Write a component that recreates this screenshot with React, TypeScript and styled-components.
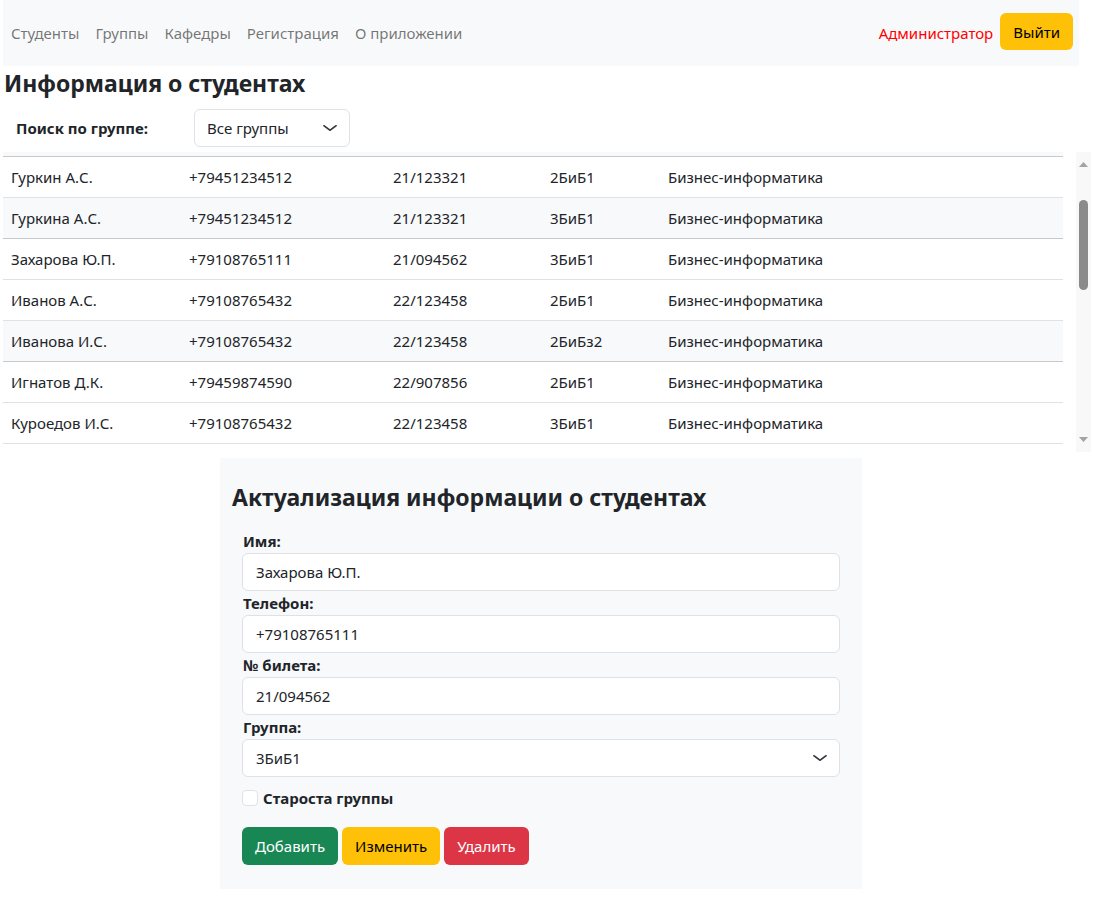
import React, { useEffect, useRef } from "react";
import styled, { createGlobalStyle } from "styled-components";

const Global = createGlobalStyle`
  html, body { margin: 0; padding: 0; background: #fff; }
  body {
    font-family: "Noto Sans", "Open Sans", sans-serif;
    font-size: 15px;
    line-height: 1.5;
    color: #212529;
  }
  * { box-sizing: border-box; }
`;

const Page = styled.div`
  padding: 0 15px 0 3px;
`;

const Navbar = styled.nav`
  height: 66px;
  background: #f8f9fa;
  display: flex;
  align-items: center;
  justify-content: space-between;
  padding: 0 6px 0 0;
`;

const NavLinks = styled.div`
  display: flex;
  align-items: center;
`;

const NavLink = styled.a`
  color: rgba(0, 0, 0, 0.55);
  text-decoration: none;
  padding: 0 8px;
  font-size: 15px;
  line-height: 24px;
`;

const NavRight = styled.div`
  display: flex;
  align-items: center;
  gap: 6px;
`;

const AdminText = styled.span`
  color: #ff0000;
  font-size: 15px;
`;

const Button = styled.button<{ $variant: "warning" | "success" | "danger" }>`
  font-family: inherit;
  font-size: 15px;
  line-height: 24px;
  height: 38px;
  padding: 0 12px;
  border-radius: 6px;
  border: 1px solid transparent;
  cursor: pointer;
  background: ${(p) =>
    p.$variant === "warning" ? "#ffc107" : p.$variant === "success" ? "#198754" : "#dc3545"};
  color: ${(p) => (p.$variant === "warning" ? "#000" : "#fff")};
`;

const LogoutButton = styled(Button)`
  height: 37px;
  margin-top: -3px;
  margin-left: 1px;
`;

const Title = styled.h2`
  font-size: 23px;
  font-weight: 700;
  line-height: 29px;
  margin: 3px 0 0 1px;
`;

const SearchRow = styled.div`
  display: flex;
  align-items: center;
  margin-top: 11px;
  padding-left: 13px;
`;

const SearchLabel = styled.label`
  width: 178px;
  font-weight: 700;
  font-size: 15px;
`;

const SelectWrap = styled.div<{ $width?: string }>`
  position: relative;
  width: ${(p) => p.$width || "100%"};
`;

const Select = styled.select<{ $padLeft?: number }>`
  appearance: none;
  -webkit-appearance: none;
  width: 100%;
  height: 38px;
  font-family: inherit;
  font-size: 15px;
  color: #212529;
  background: #fff;
  border: 1px solid #dee2e6;
  border-radius: 6px;
  padding: 0 36px 0 ${(p) => p.$padLeft ?? 12}px;
  outline: none;
`;

const Chevron = styled.svg`
  position: absolute;
  right: 12px;
  top: 13px;
  width: 16px;
  height: 12px;
  pointer-events: none;
`;

const TableArea = styled.div`
  margin-top: 5px;
  height: 300px;
  width: 1088px;
  display: flex;
  gap: 13px;
`;

const TableViewport = styled.div`
  width: 1060px;
  height: 100%;
  overflow: hidden;
`;

const TableHead = styled.div`
  position: sticky;
  top: 0;
  height: 5px;
  background: #f8f9fa;
  border-bottom: 1px solid #c8c9ca;
`;

const Row = styled.div<{ $shade?: boolean }>`
  display: grid;
  grid-template-columns: 178px 204px 157px 118px 1fr;
  height: 41px;
  align-items: center;
  border-bottom: 1px solid ${(p) => (p.$shade ? "#c8c9ca" : "#dee2e6")};
  background: ${(p) => (p.$shade ? "#f8f9fa" : "#fff")};
`;

const Cell = styled.div`
  padding: 0 8px;
  font-size: 15px;
  white-space: nowrap;
`;

const ScrollTrack = styled.div`
  width: 15px;
  height: 100%;
  background: #f8f8f8;
  display: flex;
  flex-direction: column;
  align-items: center;
`;

const ScrollArrow = styled.svg`
  width: 15px;
  height: 17px;
  flex: none;
`;

const ThumbLane = styled.div`
  flex: 1;
  width: 100%;
  display: flex;
  justify-content: center;
`;

const Thumb = styled.div`
  width: 9px;
  height: 90px;
  border-radius: 5px;
  background: #8a8a8a;
`;

const Card = styled.div`
  width: 642px;
  margin: 6px auto 0;
  background: #f8f9fa;
  padding: 25px 22px 24px;
`;

const CardTitle = styled.h3`
  font-size: 23px;
  font-weight: 700;
  line-height: 29px;
  margin: 0 0 17px -10px;
`;

const FieldLabel = styled.label`
  display: block;
  font-weight: 700;
  font-size: 15px;
  line-height: 24px;
  padding-left: 1px;
`;

const Input = styled.input`
  display: block;
  width: 100%;
  height: 38px;
  font-family: inherit;
  font-size: 15px;
  color: #212529;
  background: #fff;
  border: 1px solid #dee2e6;
  border-radius: 6px;
  padding: 0 13px;
  outline: none;
`;

const CheckRow = styled.div`
  display: flex;
  align-items: center;
  gap: 5px;
  margin-top: 10px;
`;

const Checkbox = styled.input`
  appearance: none;
  -webkit-appearance: none;
  width: 16px;
  height: 16px;
  margin: 0;
  background: #fff;
  border: 1px solid #dee2e6;
  border-radius: 4px;
`;

const CheckLabel = styled.label`
  font-weight: 700;
  font-size: 15px;
`;

const ButtonRow = styled.div`
  display: flex;
  gap: 4px;
  margin-top: 17px;
`;

const ChevronIcon = () => (
  <Chevron viewBox="0 0 16 16" preserveAspectRatio="none">
    <path d="M2 5l6 6 6-6" fill="none" stroke="#343a40" strokeWidth="2" strokeLinecap="round" strokeLinejoin="round" />
  </Chevron>
);

const students: [string, string, string, string, string][] = [
  ["Абрамов К.В.", "+79451112233", "21/100101", "2БиБ1", "Бизнес-информатика"],
  ["Белова Е.А.", "+79108761234", "22/100202", "3БиБ1", "Бизнес-информатика"],
  ["Гуркин А.С.", "+79451234512", "21/123321", "2БиБ1", "Бизнес-информатика"],
  ["Гуркина А.С.", "+79451234512", "21/123321", "3БиБ1", "Бизнес-информатика"],
  ["Захарова Ю.П.", "+79108765111", "21/094562", "3БиБ1", "Бизнес-информатика"],
  ["Иванов А.С.", "+79108765432", "22/123458", "2БиБ1", "Бизнес-информатика"],
  ["Иванова И.С.", "+79108765432", "22/123458", "2БиБз2", "Бизнес-информатика"],
  ["Игнатов Д.К.", "+79459874590", "22/907856", "2БиБ1", "Бизнес-информатика"],
  ["Куроедов И.С.", "+79108765432", "22/123458", "3БиБ1", "Бизнес-информатика"],
  ["Ларионов П.Н.", "+79451230011", "21/104455", "2БиБ1", "Бизнес-информатика"],
  ["Морозова А.А.", "+79108760022", "22/110033", "3БиБ1", "Бизнес-информатика"],
  ["Никитин С.В.", "+79451230033", "21/120044", "2БиБз2", "Бизнес-информатика"],
  ["Орлова М.Д.", "+79108760044", "22/130055", "2БиБ1", "Бизнес-информатика"],
  ["Петров Г.И.", "+79451230055", "21/140066", "3БиБ1", "Бизнес-информатика"],
  ["Романова Т.С.", "+79108760066", "22/150077", "2БиБ1", "Бизнес-информатика"],
  ["Сидоров В.А.", "+79451230077", "21/160088", "3БиБ1", "Бизнес-информатика"],
  ["Тарасова Н.Е.", "+79108760088", "22/170099", "2БиБз2", "Бизнес-информатика"],
  ["Устинов Р.О.", "+79451230099", "21/180011", "2БиБ1", "Бизнес-информатика"],
  ["Фёдорова Л.К.", "+79108760111", "22/190022", "3БиБ1", "Бизнес-информатика"],
  ["Харитонов Е.П.", "+79451230122", "21/200033", "2БиБ1", "Бизнес-информатика"],
  ["Шмелёв А.Р.", "+79108760144", "22/205050", "2БиБ1", "Бизнес-информатика"],
  ["Яковлева О.В.", "+79108760133", "22/210044", "3БиБ1", "Бизнес-информатика"],
];

const shaded = new Set([3, 6]);
const SCROLL_TOP = 82;

export default function App() {
  const viewRef = useRef<HTMLDivElement>(null);
  useEffect(() => {
    if (viewRef.current) viewRef.current.scrollTop = SCROLL_TOP;
  }, []);

  return (
    <>
      <Global />
      <Page>
        <Navbar>
          <NavLinks>
            <NavLink href="#">Студенты</NavLink>
            <NavLink href="#">Группы</NavLink>
            <NavLink href="#">Кафедры</NavLink>
            <NavLink href="#">Регистрация</NavLink>
            <NavLink href="#">О приложении</NavLink>
          </NavLinks>
          <NavRight>
            <AdminText>Администратор</AdminText>
            <LogoutButton $variant="warning">Выйти</LogoutButton>
          </NavRight>
        </Navbar>

        <Title>Информация о студентах</Title>

        <SearchRow>
          <SearchLabel>Поиск по группе:</SearchLabel>
          <SelectWrap $width="156px">
            <Select defaultValue="all">
              <option value="all">Все группы</option>
              <option>2БиБ1</option>
              <option>3БиБ1</option>
              <option>2БиБз2</option>
            </Select>
            <ChevronIcon />
          </SelectWrap>
        </SearchRow>

        <TableArea>
          <TableViewport ref={viewRef}>
            <TableHead />
            {students.map((s, i) => (
              <Row key={i} $shade={shaded.has(i)}>
                {s.map((c, j) => (
                  <Cell key={j}>{c}</Cell>
                ))}
              </Row>
            ))}
          </TableViewport>
          <ScrollTrack>
            <ScrollArrow viewBox="0 0 15 17">
              <path d="M3 15 L7.5 10 L12 15 Z" fill="#a3a3a3" />
            </ScrollArrow>
            <ThumbLane>
              <Thumb style={{ marginTop: 31 }} />
            </ThumbLane>
            <ScrollArrow viewBox="0 0 15 17">
              <path d="M3 2 L12 2 L7.5 7 Z" fill="#a3a3a3" />
            </ScrollArrow>
          </ScrollTrack>
        </TableArea>

        <Card>
          <CardTitle>Актуализация информации о студентах</CardTitle>
          <FieldLabel>Имя:</FieldLabel>
          <Input defaultValue="Захарова Ю.П." />
          <FieldLabel>Телефон:</FieldLabel>
          <Input defaultValue="+79108765111" />
          <FieldLabel>№ билета:</FieldLabel>
          <Input defaultValue="21/094562" />
          <FieldLabel>Группа:</FieldLabel>
          <SelectWrap>
            <Select defaultValue="3БиБ1" $padLeft={13}>
              <option>2БиБ1</option>
              <option>3БиБ1</option>
              <option>2БиБз2</option>
            </Select>
            <ChevronIcon />
          </SelectWrap>
          <CheckRow>
            <Checkbox type="checkbox" id="head" />
            <CheckLabel htmlFor="head">Староста группы</CheckLabel>
          </CheckRow>
          <ButtonRow>
            <Button $variant="success">Добавить</Button>
            <Button $variant="warning">Изменить</Button>
            <Button $variant="danger">Удалить</Button>
          </ButtonRow>
        </Card>
      </Page>
    </>
  );
}
